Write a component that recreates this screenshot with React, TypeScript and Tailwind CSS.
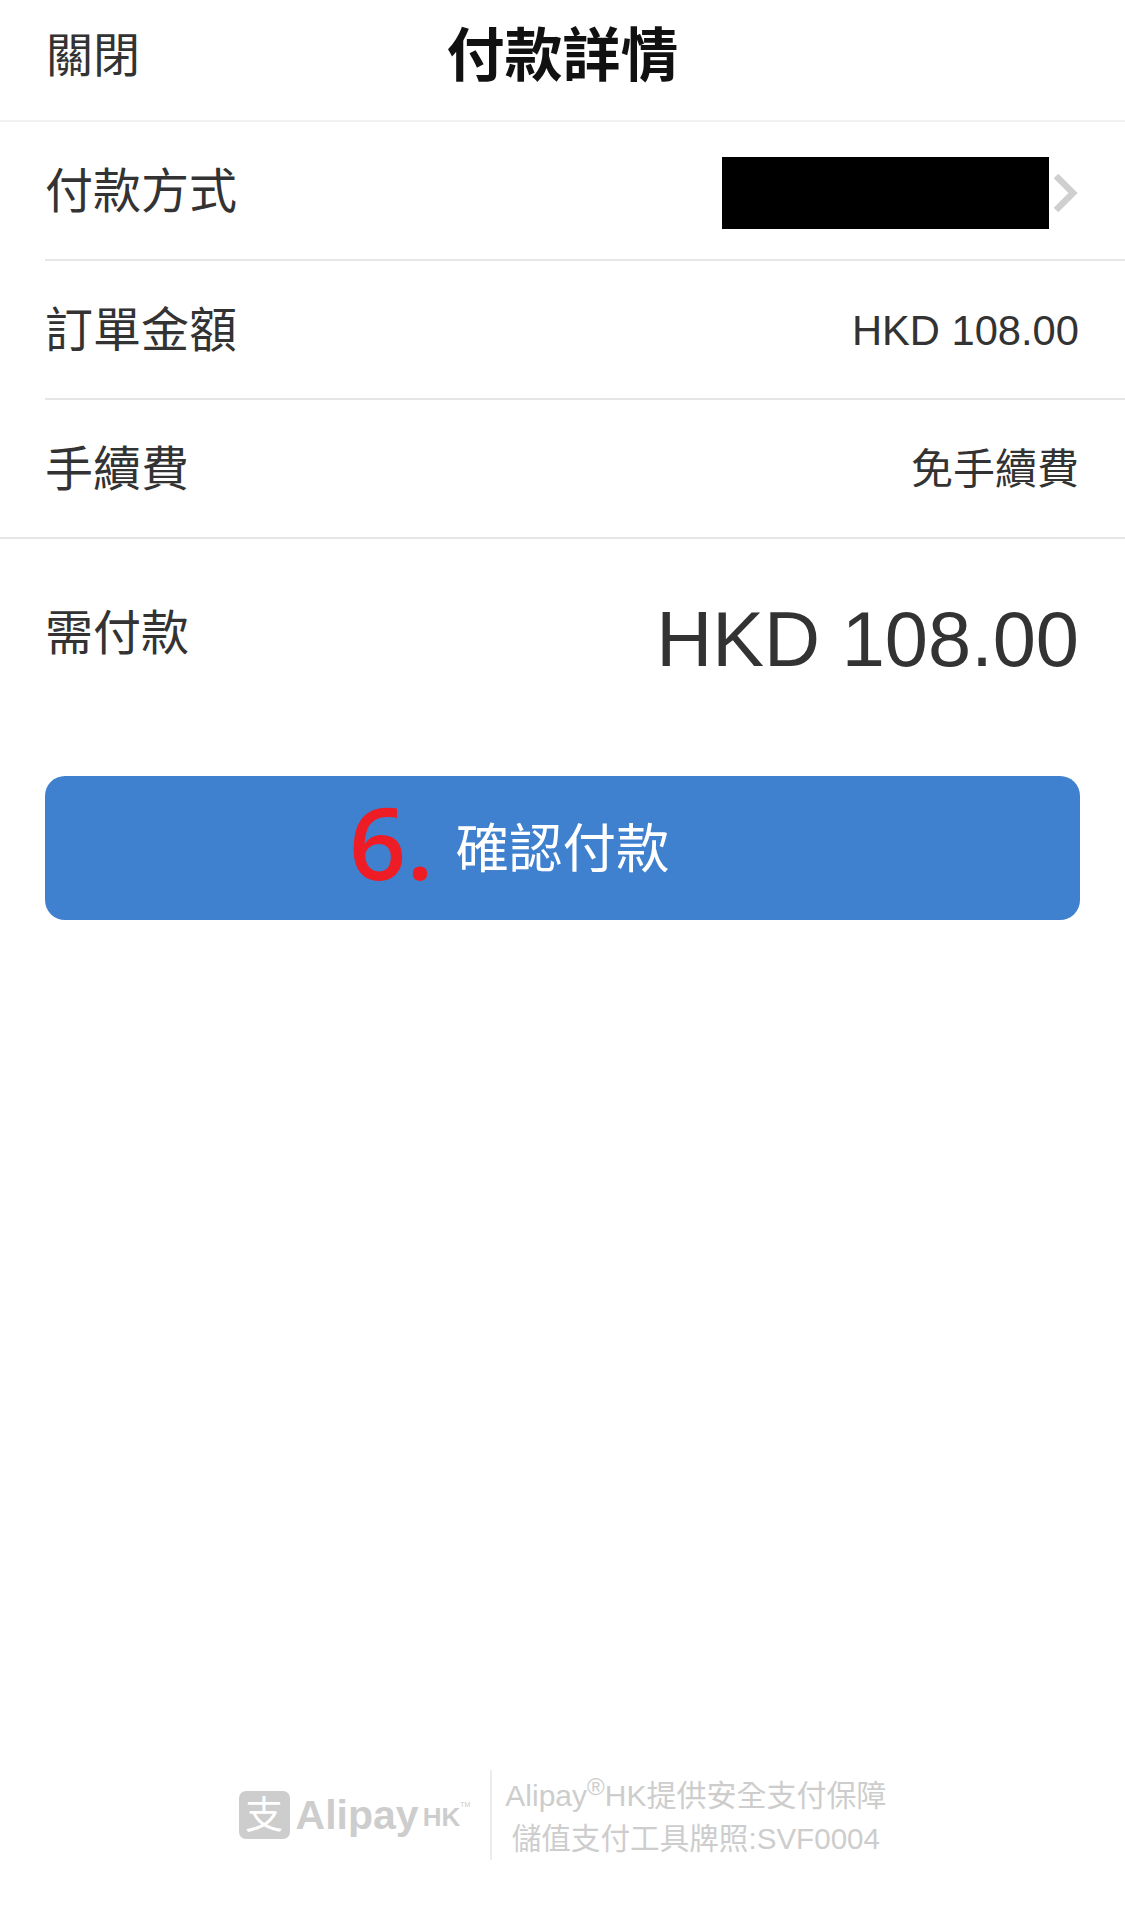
const CJK = "font-['Liberation_Sans','Noto_Sans_CJK_TC',sans-serif]";

function Row({
  label,
  children,
  border = "ml-[45px]",
}: {
  label: string;
  children: React.ReactNode;
  border?: string;
}) {
  return (
    <div className={`flex h-[139px] items-center justify-between border-b-2 border-[#e6e6e8] pr-[46px] ${border}`}>
      <span className="mt-[3px] text-[48px] leading-none text-[#333333]">{label}</span>
      {children}
    </div>
  );
}

export default function App() {
  return (
    <div className={`flex h-[1930px] w-[1125px] flex-col bg-white ${CJK}`}>
      {/* header */}
      <div className="relative flex h-[122px] items-center justify-center border-b-2 border-[#f1f1f3]">
        <span className="absolute left-[46px] top-[32px] text-[47px] leading-none text-[#333333]">關閉</span>
        <h1 className="mb-[8px] text-[58px] font-bold leading-none text-[#111111]">付款詳情</h1>
      </div>

      <Row label="付款方式">
        <div className="mt-[4px] mr-[1px] flex items-center">
          <div className="h-[72px] w-[327px] bg-black" />
          <svg className="ml-[3px]" width="26" height="40" viewBox="0 0 26 40" fill="none">
            <path d="M4 3 L21 20 L4 37" stroke="#cfcfcf" strokeWidth="6.5" />
          </svg>
        </div>
      </Row>
      <Row label="訂單金額">
        <span className="mt-[3px] text-[41.7px] leading-none text-[#333333]">HKD 108.00</span>
      </Row>
      <Row label="手續費" border="pl-[45px]">
        <span className="mt-[3px] text-[42px] leading-none text-[#333333]">免手續費</span>
      </Row>

      {/* total */}
      <div className="flex items-start justify-between pl-[45px] pr-[46px] pt-[64px]">
        <span className="mt-[7px] text-[48px] leading-none text-[#333333]">需付款</span>
        <span className="mt-[-2px] text-[77.6px] leading-none text-[#333333]">HKD 108.00</span>
      </div>

      <button
        type="button"
        className="relative mx-[45px] mt-[97px] flex h-[144px] w-[1035px] items-center justify-center rounded-[20px] bg-[#3f80cf] pt-[5px] text-[53.5px] text-white"
      >
        確認付款
        <span className="absolute left-[304px] top-[-5px] font-['Open_Sans',sans-serif] text-[100px] font-semibold leading-[1.4] text-[#ee1c25]">
          6.
        </span>
      </button>

      {/* footer */}
      <div className="mt-auto mb-[70px] flex items-center justify-center">
        <div className="flex items-center">
          <div className="flex h-[48px] w-[51px] items-center justify-center rounded-[7px] bg-[#cdcdcd] text-[38px] font-normal leading-none text-white">
            支
          </div>
          <span className="ml-[6px] text-[41px] font-bold leading-none text-[#cdcdcd]">Alipay</span>
          <span className="ml-[4px] mt-[4px] text-[26px] font-bold leading-none text-[#cdcdcd]">HK</span>
          <span className="mb-[22px] text-[7px] leading-none text-[#cdcdcd]">TM</span>
        </div>
        <div className="ml-[20px] flex h-[90px] border-l-2 border-[#ececec] pl-[13px]">
          <div className="mt-[4px] flex flex-col items-center text-[30px] leading-[43px] text-[#cdcdcd]">
            <span>
              Alipay<sup className="top-[-11px] text-[24px] leading-none">®</sup>HK提供安全支付保障
            </span>
            <span className="text-[29.6px]">儲值支付工具牌照:SVF0004</span>
          </div>
        </div>
      </div>
    </div>
  );
}
